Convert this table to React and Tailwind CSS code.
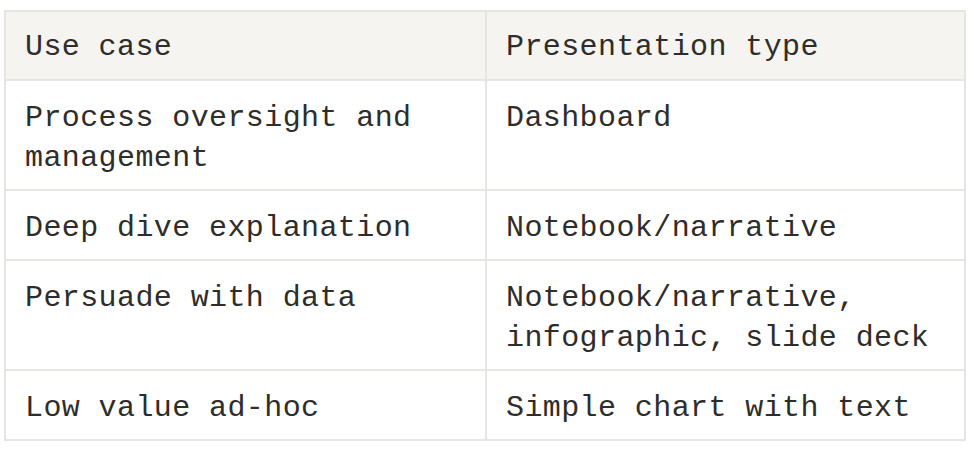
export default function App() {
  const rows = [
    ["Process oversight and management", "Dashboard"],
    ["Deep dive explanation", "Notebook/narrative"],
    ["Persuade with data", "Notebook/narrative, infographic, slide deck"],
    ["Low value ad-hoc", "Simple chart with text"],
  ];
  return (
    <div className="w-[972px] h-[450px] bg-white pt-[10px] pl-[4px]">
      <table
        className="w-[962px] border-collapse text-[30px] leading-[40px] tracking-[0.4px] text-[#2e2d2a]"
        style={{ fontFamily: '"Liberation Mono", monospace' }}
      >
        <thead>
          <tr className="bg-[#f5f4f0]">
            <th className="w-[481px] border-2 border-[#e7e5e1] px-[19px] pt-[15px] pb-[12px] text-left font-normal align-top">Use case</th>
            <th className="border-2 border-[#e7e5e1] px-[19px] pt-[15px] pb-[12px] text-left font-normal align-top">Presentation type</th>
          </tr>
        </thead>
        <tbody>
          {rows.map((r, i) => (
            <tr key={i}>
              <td className="border-2 border-[#e7e5e1] px-[19px] pt-[17px] pb-[11px] align-top">{r[0]}</td>
              <td className="border-2 border-[#e7e5e1] px-[19px] pt-[17px] pb-[11px] align-top">{r[1]}</td>
            </tr>
          ))}
        </tbody>
      </table>
    </div>
  );
}
